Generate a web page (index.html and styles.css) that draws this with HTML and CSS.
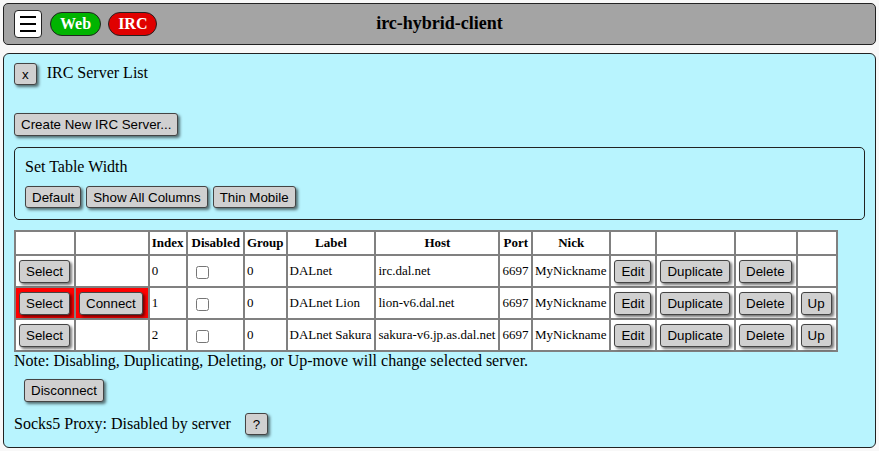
FILE: index.html
```html
<!DOCTYPE html>
<html>
<head>
<meta charset="utf-8">
<title>irc-hybrid-client</title>
<link rel="stylesheet" href="styles.css">
</head>
<body>
<header class="bar">
  <div class="bar-left">
    <button class="hamburger" aria-label="menu"><svg width="16" height="16" viewBox="0 0 16 16"><path d="M0 1h16M0 8h16M0 15h16" stroke="#000" stroke-width="2" fill="none"/></svg></button>
    <span class="pill pill-web">Web</span>
    <span class="pill pill-irc">IRC</span>
  </div>
  <div class="bar-title">irc-hybrid-client</div>
  <div class="bar-right"></div>
</header>
<main class="panel">
  <div class="panel-head">
    <button class="btn">x</button>
    <span class="panel-title">IRC Server List</span>
  </div>
  <div class="create-row"><button class="btn">Create New IRC Server...</button></div>
  <div class="width-box">
    <div class="width-title">Set Table Width</div>
    <div class="btn-row">
      <button class="btn">Default</button>
      <button class="btn">Show All Columns</button>
      <button class="btn">Thin Mobile</button>
    </div>
  </div>
  <table class="srv">
    <tr class="hdr">
      <th></th><th></th><th>Index</th><th class="wider">Disabled</th><th>Group</th><th>Label</th><th>Host</th><th class="wide">Port</th><th>Nick</th><th></th><th></th><th></th><th></th>
    </tr>
    <tr>
      <td><button class="btn">Select</button></td>
      <td></td>
      <td>0</td>
      <td><input class="cb" type="checkbox"></td>
      <td>0</td>
      <td class="txt">DALnet</td>
      <td class="txt">irc.dal.net</td>
      <td>6697</td>
      <td class="txt">MyNickname</td>
      <td><button class="btn">Edit</button></td>
      <td><button class="btn">Duplicate</button></td>
      <td><button class="btn">Delete</button></td>
      <td></td>
    </tr>
    <tr>
      <td class="sel"><button class="btn">Select</button></td>
      <td class="sel"><button class="btn wide-btn">Connect</button></td>
      <td>1</td>
      <td><input class="cb" type="checkbox"></td>
      <td>0</td>
      <td class="txt">DALnet Lion</td>
      <td class="txt">lion-v6.dal.net</td>
      <td>6697</td>
      <td class="txt">MyNickname</td>
      <td><button class="btn">Edit</button></td>
      <td><button class="btn">Duplicate</button></td>
      <td><button class="btn">Delete</button></td>
      <td><button class="btn">Up</button></td>
    </tr>
    <tr>
      <td><button class="btn">Select</button></td>
      <td></td>
      <td>2</td>
      <td><input class="cb" type="checkbox"></td>
      <td>0</td>
      <td class="txt">DALnet Sakura</td>
      <td class="txt">sakura-v6.jp.as.dal.net</td>
      <td>6697</td>
      <td class="txt">MyNickname</td>
      <td><button class="btn">Edit</button></td>
      <td><button class="btn">Duplicate</button></td>
      <td><button class="btn">Delete</button></td>
      <td><button class="btn">Up</button></td>
    </tr>
  </table>
  <div class="note">Note: Disabling, Duplicating, Deleting, or Up-move will change selected server.</div>
  <div class="disc-row"><button class="btn">Disconnect</button></div>
  <div class="socks"><span>Socks5 Proxy: Disabled by server</span><button class="btn btn-help">?</button></div>
</main>
</body>
</html>
```

FILE: styles.css
```css
html, body {
  margin: 0;
  padding: 0;
}
body {
  background: #f8f8f8;
  font-family: "Liberation Serif", "Times New Roman", serif;
  font-size: 16px;
  color: #000;
  padding: 3px;
}
.bar {
  display: grid;
  grid-template-columns: 1fr auto 1fr;
  align-items: center;
  height: 40px;
  background: #a4a4a4;
  border: 1px solid #222;
  border-radius: 5px;
  padding: 0 10px;
}
.bar-left {
  display: flex;
  align-items: center;
  gap: 7px;
}
.hamburger {
  width: 28px;
  height: 28px;
  margin: 0 1px 0 0;
  padding: 0;
  background: #fff;
  border: 1px solid #222;
  border-radius: 4px;
  display: flex;
  align-items: center;
  justify-content: center;
}
.pill {
  display: inline-block;
  height: 22px;
  line-height: 22px;
  padding: 0 9px;
  border: 1px solid #222;
  border-radius: 12px;
  color: #fff;
  font-weight: bold;
  font-size: 16px;
}
.pill-web { background: #00b400; }
.pill-irc { background: #e00000; }
.bar-title {
  font-weight: bold;
  font-size: 18px;
  padding-bottom: 2px;
}
.panel {
  display: block;
  margin-top: 8px;
  background: #b8f4fe;
  border: 1px solid #222;
  border-radius: 6px;
  padding: 9px 10px 12px 10px;
}
.btn {
  font-family: "Liberation Sans", Arial, sans-serif;
  font-size: 13.33px;
  line-height: 15px;
  color: #000;
  background: #d0d0d0;
  border: 1px solid #444;
  border-radius: 3px;
  padding: 3px 6px 3px 6px;
  margin: 0;
  box-shadow: 2px 2px 3px rgba(0, 0, 0, 0.55);
  vertical-align: middle;
}
.panel-head {
  display: flex;
  align-items: center;
  gap: 10px;
  height: 22px;
}
.panel-head .btn {
  padding: 3px 7px 2px 7px;
}
.panel-title {
  font-size: 16px;
  padding-bottom: 2px;
}
.create-row {
  margin-top: 28px;
}
.width-box {
  margin-top: 11px;
  border: 1px solid #222;
  border-radius: 5px;
  padding: 9px 10px 11px 10px;
}
.width-title {
  font-size: 16px;
  line-height: 19px;
}
.btn-row {
  display: flex;
  gap: 5px;
  margin-top: 10px;
}
.btn-row .btn {
  padding: 3px 6px 2px 6px;
}
.srv {
  margin-top: 10px;
  border-collapse: collapse;
  background: #fff;
  font-size: 13px;
}
.srv th, .srv td {
  border: 2px solid #808080;
  padding: 1px 2px;
  white-space: nowrap;
  vertical-align: middle;
}
.srv th {
  padding: 3px 2px;
  line-height: 16px;
  font-weight: bold;
}
.srv th.wide {
  padding: 3px 3px;
}
.srv th.wider {
  padding: 3px 3px 3px 4px;
}
.srv td {
  height: 28px;
  text-align: left;
}
.srv td.txt {
  padding-right: 3px;
}
.srv td .btn {
  margin: 0 2px 0 1px;
}
.srv td .wide-btn {
  margin: 0 3px 0 1px;
}
.srv td.sel {
  background: #ff0000;
}
.cb {
  width: 13px;
  height: 13px;
  margin: 0 0 0 6px;
  vertical-align: middle;
}
.note {
  font-size: 16px;
  line-height: 18px;
  margin-top: 0;
}
.disc-row {
  margin-top: 9px;
  padding-left: 10px;
}
.socks {
  margin-top: 11px;
  display: flex;
  align-items: center;
  gap: 14px;
  font-size: 16px;
}
.btn-help {
  padding: 3px 7px 2px 7px;
}
```
